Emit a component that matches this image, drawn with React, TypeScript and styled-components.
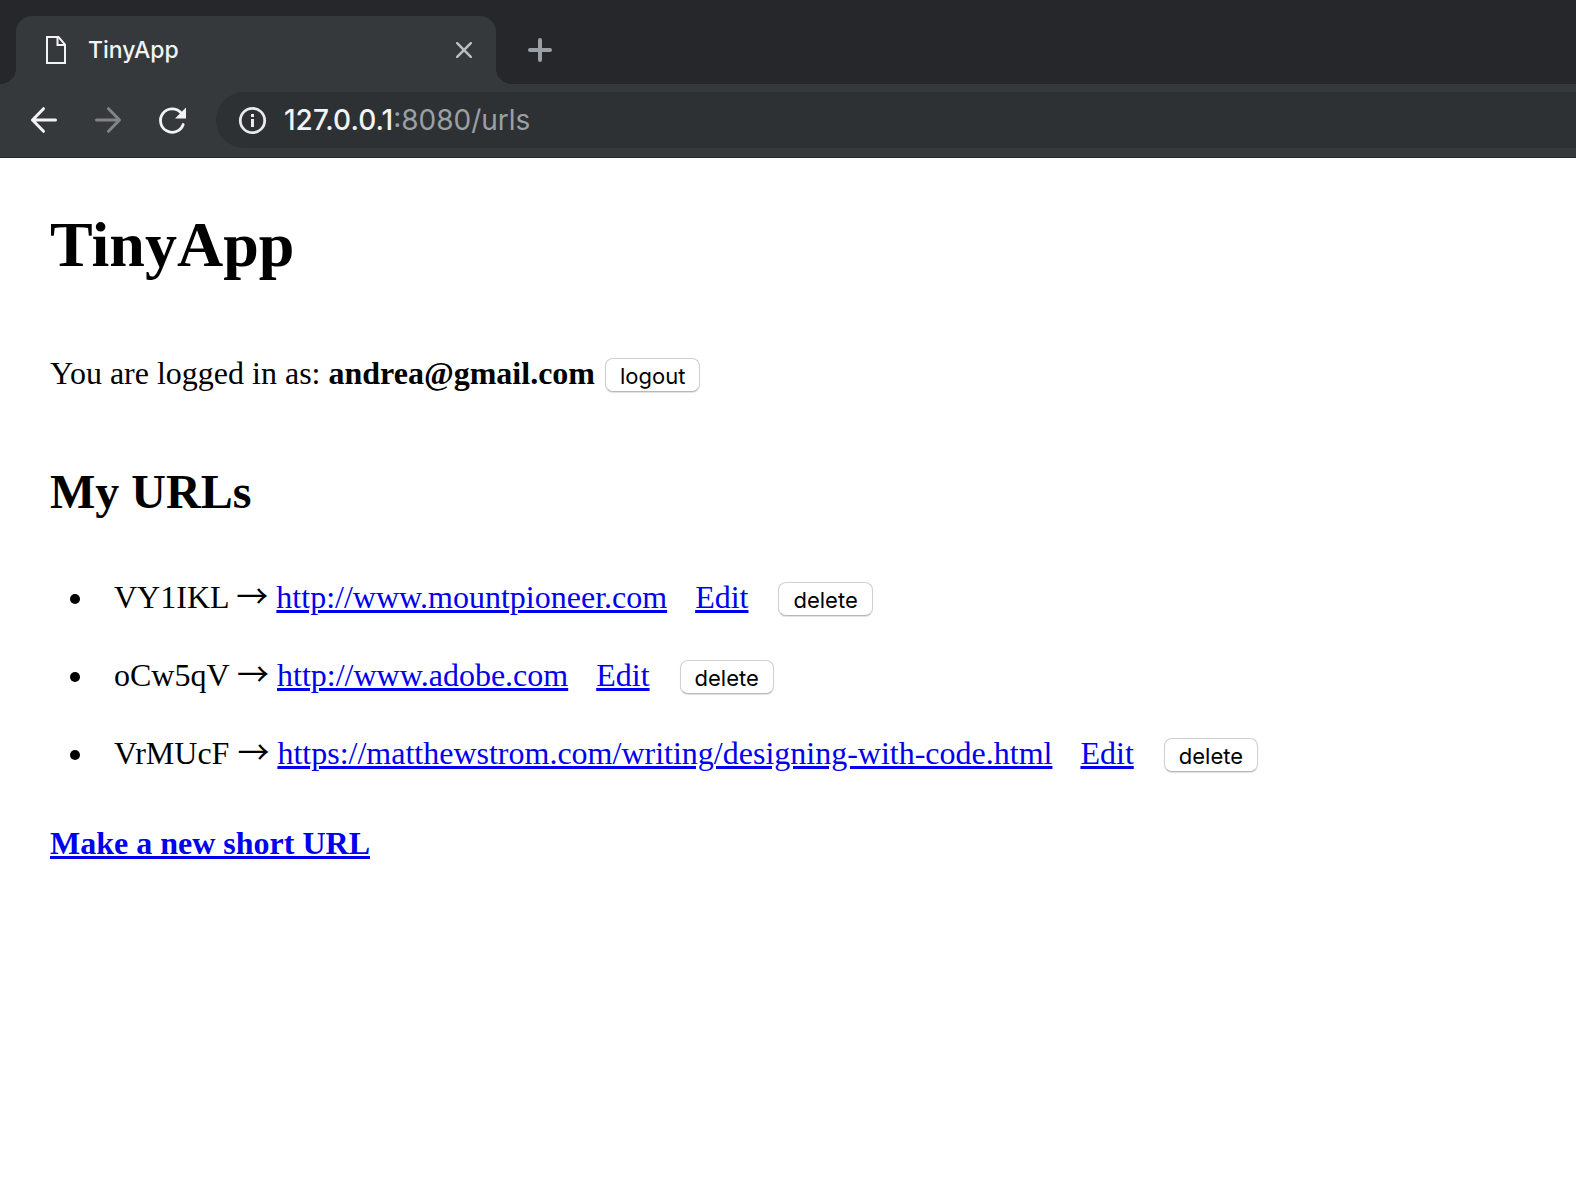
import React from "react";
import styled, { createGlobalStyle, css } from "styled-components";

const FRAME = "#26272b";
const TOOLBAR = "#36393c";
const FIELD = "#2d3133";
const LIGHT = "#f1f3f4";
const UI_FONT = 'Inter, "Liberation Sans", sans-serif';
const PAGE_FONT = '"Liberation Serif", "Times New Roman", serif';

const GlobalStyle = createGlobalStyle`
  *, *::before, *::after { box-sizing: border-box; }
  body { margin: 0; background: #fff; }
`;

const Browser = styled.div`
  display: flex;
  flex-direction: column;
  min-height: 100vh;
`;

const TabStrip = styled.header`
  display: flex;
  height: 84px;
  padding: 16px 16px 0;
  background: ${FRAME};
`;

const flare = css`
  content: "";
  position: absolute;
  bottom: 0;
  width: 16px;
  height: 16px;
`;

const Tab = styled.div`
  position: relative;
  display: flex;
  align-items: center;
  width: 480px;
  padding: 0 22px 0 30px;
  border-radius: 16px 16px 0 0;
  background: ${TOOLBAR};

  &::before {
    ${flare}
    left: -16px;
    background: radial-gradient(circle at 0 0, transparent 16px, ${TOOLBAR} 16px);
  }

  &::after {
    ${flare}
    right: -16px;
    background: radial-gradient(circle at 100% 0, transparent 16px, ${TOOLBAR} 16px);
  }
`;

const TabTitle = styled.span`
  flex: 1;
  padding-left: 22px;
  color: ${LIGHT};
  font: 500 23px/32px ${UI_FONT};
`;

const IconButton = styled.button<{ $size: number; $color: string }>`
  display: grid;
  place-items: center;
  flex: none;
  width: ${(p) => p.$size}px;
  height: ${(p) => p.$size}px;
  padding: 0;
  border: 0;
  background: none;
  color: ${(p) => p.$color};
  cursor: pointer;
`;

const NewTab = styled.div`
  display: flex;
  align-items: center;
  padding-left: 28px;
`;

const Toolbar = styled.nav`
  display: flex;
  align-items: center;
  height: 74px;
  padding: 8px 0 9px 28px;
  border-bottom: 1px solid #26282a;
  background: ${TOOLBAR};
`;

const NavButtons = styled.div`
  display: flex;
  gap: 32px;
  padding-right: 28px;
`;

const AddressBar = styled.div`
  display: flex;
  align-items: center;
  flex: 1;
  gap: 16px;
  height: 56px;
  padding-left: 20px;
  border-radius: 28px 0 0 28px;
  background: ${FIELD};
`;

const Address = styled.div`
  flex: 1;
  color: #9aa0a6;
  font: 400 28px/36px ${UI_FONT};
  outline: none;
`;

const Host = styled.span`
  color: ${LIGHT};
  font-weight: 500;
`;

const Page = styled.main`
  flex: 1;
  padding: 50px;
  background: #fff;
  color: #000;
  font: 32px/40px ${PAGE_FONT};
`;

const Title = styled.h1`
  margin: 0;
  font-size: 64px;
  line-height: 74px;
`;

const Account = styled.p`
  margin: 71px 0;
`;

const Subtitle = styled.h2`
  margin: 0;
  font-size: 48px;
  line-height: 56px;
`;

const UrlList = styled.ul`
  display: flex;
  flex-direction: column;
  gap: 38px;
  margin: 57px 0 50px;
  padding-left: 46px;
`;

const UrlItem = styled.li`
  padding-left: 18px;
`;

const Arrow = styled.span`
  font-family: "Noto Sans CJK JP", sans-serif;
  line-height: 32px;
`;

const Link = styled.a<{ $strong?: boolean }>`
  color: #0000ee;
  font-weight: ${(p) => (p.$strong ? 700 : 400)};
  text-decoration: underline;
`;

const EditLink = styled(Link)`
  margin: 0 30px 0 28px;
`;

const PushButton = styled.button`
  height: 34px;
  padding: 2px 14px 0;
  border: 1px solid #d0d0d0;
  border-bottom-color: #b8b8b8;
  border-radius: 8px;
  background: #fff;
  box-shadow: 0 1px 1px rgba(0, 0, 0, 0.12);
  color: #000;
  font: 400 22px/30px ${UI_FONT};
`;

const LogoutButton = styled(PushButton)`
  margin-left: 10px;
`;

const PageIcon = () => (
  <svg width="20" height="28" viewBox="0 0 20 28" fill="none" stroke={LIGHT} strokeWidth="2" aria-hidden="true">
    <path d="M1 1H12.500L19 8.500V27H1Z" />
    <path d="M11.500 1V9H19" />
  </svg>
);

const CloseIcon = () => (
  <svg width="16" height="16" viewBox="0 0 16 16" stroke="currentColor" strokeWidth="2.400" strokeLinecap="round" aria-hidden="true">
    <path d="M1.200 1.200 14.800 14.800M14.800 1.200 1.200 14.800" />
  </svg>
);

const PlusIcon = () => (
  <svg width="24" height="24" viewBox="0 0 24 24" stroke="currentColor" strokeWidth="4" strokeLinecap="round" aria-hidden="true">
    <path d="M12 2V22M2 12H22" />
  </svg>
);

const BackIcon = () => (
  <svg width="32" height="32" viewBox="0 0 32 32" fill="none" stroke="currentColor" strokeWidth="3" strokeLinecap="round" strokeLinejoin="round" aria-hidden="true">
    <path d="M27.500 16H4.500M15.500 4.700 4.500 16 15.500 27.300" />
  </svg>
);

const ForwardIcon = () => (
  <svg width="32" height="32" viewBox="0 0 32 32" fill="none" stroke="currentColor" strokeWidth="3" strokeLinecap="round" strokeLinejoin="round" aria-hidden="true">
    <path d="M4.500 16H27.500M16.500 4.700 27.500 16 16.500 27.300" />
  </svg>
);

const ReloadIcon = () => (
  <svg width="32" height="32" viewBox="0 0 32 32" fill="none" aria-hidden="true">
    <path d="M24.700 8.500A11.700 11.700 0 1 0 27.200 20.500" stroke="currentColor" strokeWidth="2.800" strokeLinecap="round" />
    <path d="M30 3.500V14.500H19Z" fill="currentColor" />
  </svg>
);

const InfoIcon = () => (
  <svg width="32" height="32" viewBox="0 0 32 32" fill="none" aria-hidden="true">
    <circle cx="16.500" cy="16.500" r="12.200" stroke="#e8eaed" strokeWidth="2.800" />
    <path d="M15 10H18V13H15ZM15 15H18V23H15Z" fill="#e8eaed" />
  </svg>
);

const urls = [
  { id: "VY1IKL", href: "http://www.mountpioneer.com" },
  { id: "oCw5qV", href: "http://www.adobe.com" },
  { id: "VrMUcF", href: "https://matthewstrom.com/writing/designing-with-code.html" },
];

export default function App() {
  return (
    <Browser>
      <GlobalStyle />
      <TabStrip>
        <Tab>
          <PageIcon />
          <TabTitle>TinyApp</TabTitle>
          <IconButton $size={20} $color="#bdc1c6" aria-label="Close tab">
            <CloseIcon />
          </IconButton>
        </Tab>
        <NewTab>
          <IconButton $size={32} $color="#9aa0a6" aria-label="New tab">
            <PlusIcon />
          </IconButton>
        </NewTab>
      </TabStrip>
      <Toolbar aria-label="Browser">
        <NavButtons>
          <IconButton $size={32} $color={LIGHT} aria-label="Back">
            <BackIcon />
          </IconButton>
          <IconButton $size={32} $color="#828486" aria-label="Forward">
            <ForwardIcon />
          </IconButton>
          <IconButton $size={32} $color={LIGHT} aria-label="Reload">
            <ReloadIcon />
          </IconButton>
        </NavButtons>
        <AddressBar>
          <InfoIcon />
          <Address role="textbox" aria-label="Address" contentEditable suppressContentEditableWarning spellCheck={false}>
            <Host>127.0.0.1</Host>:8080/urls
          </Address>
        </AddressBar>
      </Toolbar>
      <Page>
        <Title>TinyApp</Title>
        <Account>
          You are logged in as: <b>andrea@gmail.com</b>
          <LogoutButton type="button">logout</LogoutButton>
        </Account>
        <Subtitle>My URLs</Subtitle>
        <UrlList>
          {urls.map((url) => (
            <UrlItem key={url.id}>
              {url.id} <Arrow>→</Arrow> <Link href={url.href}>{url.href}</Link>
              <EditLink href={`/urls/${url.id}`}>Edit</EditLink>
              <PushButton type="button">delete</PushButton>
            </UrlItem>
          ))}
        </UrlList>
        <Link $strong href="/urls/new">
          Make a new short URL
        </Link>
      </Page>
    </Browser>
  );
}
